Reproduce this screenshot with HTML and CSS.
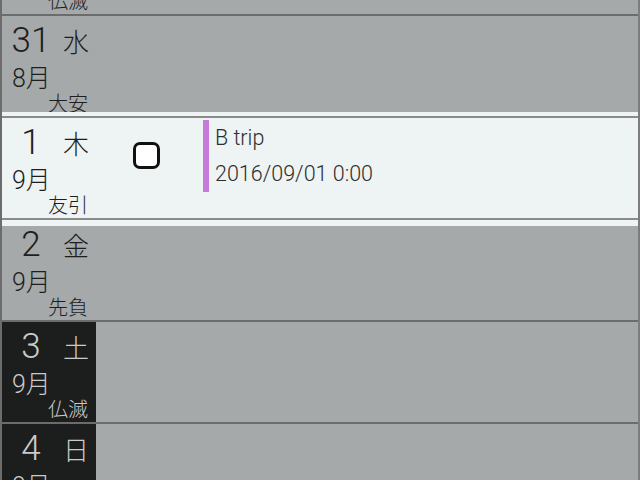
FILE: index.html
```html
<!DOCTYPE html>
<html lang="ja">
<head>
<meta charset="utf-8">
<title>Calendar</title>
<link rel="stylesheet" href="styles.css">
</head>
<body>
<div class="list">
  <div class="row">
    <div class="day">
      <div class="top"><span class="num">30</span><span class="wd">火</span></div>
      <div class="mon">8月</div>
      <div class="rok">仏滅</div>
    </div>
  </div>
  <div class="row">
    <div class="day">
      <div class="top"><span class="num">31</span><span class="wd">水</span></div>
      <div class="mon">8月</div>
      <div class="rok">大安</div>
    </div>
  </div>
  <div class="row sel">
    <div class="day">
      <div class="top"><span class="num">1</span><span class="wd">木</span></div>
      <div class="mon">9月</div>
      <div class="rok">友引</div>
    </div>
    <div class="check"></div>
    <div class="event">
      <div class="ev-title">B trip</div>
      <div class="ev-time">2016/09/01 0:00</div>
    </div>
  </div>
  <div class="row">
    <div class="day">
      <div class="top"><span class="num">2</span><span class="wd">金</span></div>
      <div class="mon">9月</div>
      <div class="rok">先負</div>
    </div>
  </div>
  <div class="row weekend">
    <div class="day">
      <div class="top"><span class="num">3</span><span class="wd">土</span></div>
      <div class="mon">9月</div>
      <div class="rok">仏滅</div>
    </div>
  </div>
  <div class="row weekend">
    <div class="day">
      <div class="top"><span class="num">4</span><span class="wd">日</span></div>
      <div class="mon">9月</div>
      <div class="rok">大安</div>
    </div>
  </div>
</div>
</body>
</html>
```
FILE: styles.css
```css
html, body {
  margin: 0;
  padding: 0;
  height: 480px;
  overflow: hidden;
  background: #a5a9a9;
}
body {
  font-family: "Liberation Sans", "Noto Sans CJK JP", sans-serif;
  color: #1e1e1e;
}
.list {
  margin-top: -88px;
  border-left: 2px solid #6c6c6c;
  border-right: 2px solid #7d7d7d;
}
.row {
  display: flex;
  height: 100px;
  border-top: 2px solid #6c6c6c;
  background: #a5a9a9;
}
.sel {
  background: #eef3f3;
  border-top-color: #8a8a8a;
  position: relative;
  z-index: 1;
  box-shadow: 0 2px 0 #8a8a8a, 0 8px 0 #eef3f3, 0 -4px 0 #eef3f3;
}
.day {
  width: 94px;
  box-sizing: border-box;
  padding: 7px 7px 0 9px;
  display: flex;
  flex-direction: column;
  font-family: "Roboto", "Noto Sans CJK JP", sans-serif;
  font-weight: 300;
}
.weekend .day {
  background: #1c1d1d;
  color: #cacaca;
}
.top {
  display: flex;
  align-items: baseline;
  justify-content: space-between;
  height: 35px;
}
.num {
  width: 40px;
  text-align: center;
  font-size: 35px;
  line-height: 35px;
}
.wd {
  font-size: 26px;
  line-height: 35px;
}
.mon {
  margin-top: 8px;
  font-size: 25px;
  line-height: 25px;
  margin-left: 1px;
}
.rok {
  margin-top: 3px;
  margin-right: 1px;
  font-size: 20px;
  line-height: 20px;
  text-align: right;
}
.check {
  margin: 24px 0 0 37px;
  width: 27px;
  height: 27px;
  box-sizing: border-box;
  border: 3px solid #111;
  border-radius: 7px;
  background: #fff;
}
.event {
  margin: 2px 0 0 43px;
  height: 72px;
  border-left: 6px solid #c77bd8;
  padding-left: 6px;
  font-family: "Roboto", "Liberation Sans", sans-serif;
  font-weight: 300;
  font-size: 21.5px;
  line-height: 36px;
  color: #2e2e2e;
}
```
